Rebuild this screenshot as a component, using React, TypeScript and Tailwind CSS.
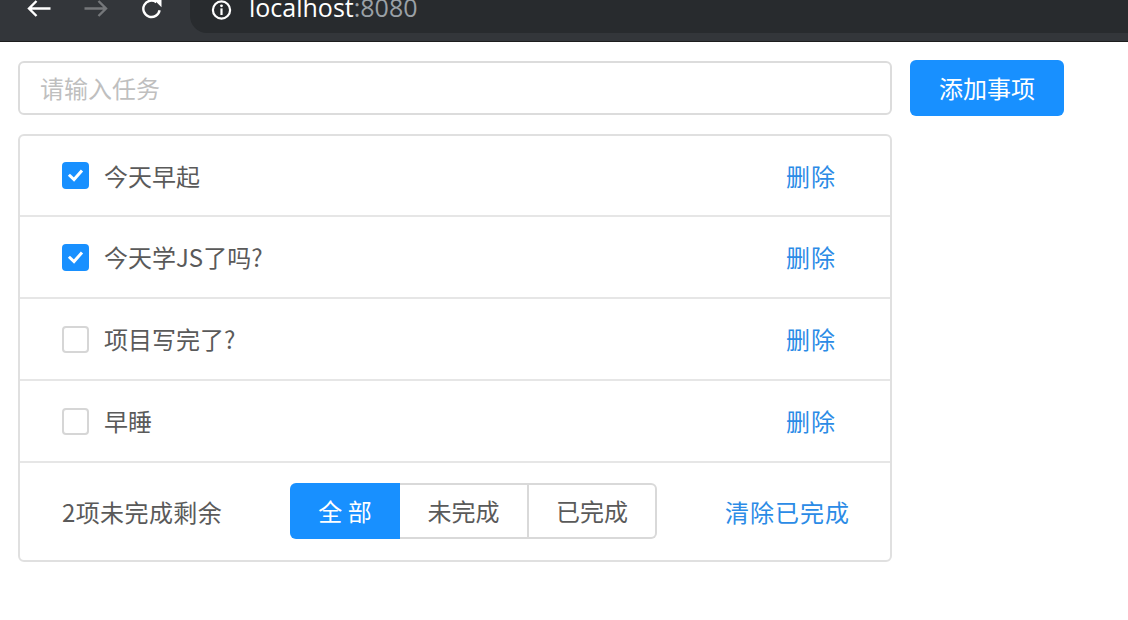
import React from 'react';

const items = [
  { text: '今天早起', done: true },
  { text: '今天学JS了吗?', done: true },
  { text: '项目写完了?', done: false },
  { text: '早睡', done: false },
];

const cjk = { fontFamily: '"Noto Sans CJK SC", "Noto Sans", sans-serif' };

function Check({ done }: { done: boolean }) {
  if (done) {
    return (
      <div className="w-[27px] h-[27px] rounded-[4px] bg-[#1890ff] flex items-center justify-center shrink-0">
        <svg width="17" height="17" viewBox="0 0 17 17">
          <path d="M3 8.8 L7 12.6 L14 4.6" fill="none" stroke="white" strokeWidth="3" strokeLinecap="square" />
        </svg>
      </div>
    );
  }
  return <div className="w-[27px] h-[27px] rounded-[4px] border-2 border-[#d6d6d6] bg-white shrink-0" />;
}

export default function App() {
  return (
    <div className="w-[1128px] h-[620px] bg-white overflow-hidden" style={cjk}>
      {/* browser toolbar */}
      <div className="h-[42px] bg-[#33363a] border-b border-[#1d1d1d] flex items-start">
        <div className="w-[190px] flex items-start h-[33px]">
          <svg className="ml-[26px] -mt-[1px]" width="26" height="20" viewBox="0 0 26 20">
            <path d="M24.5 9.5 H3 M10.5 2 L3 9.5 L10.5 17" fill="none" stroke="#ffffff" strokeWidth="2.4" />
          </svg>
          <svg className="ml-[31px] -mt-[1px]" width="26" height="20" viewBox="0 0 26 20">
            <path d="M1.5 9.5 H23 M15.5 2 L23 9.5 L15.5 17" fill="none" stroke="#75777a" strokeWidth="2.4" />
          </svg>
          <svg className="ml-[31px] -mt-[2px]" width="26" height="22" viewBox="0 0 26 22">
            <path d="M16.4 4.2 A8.2 8.2 0 1 0 19.6 12.3" fill="none" stroke="#ffffff" strokeWidth="2.4" />
            <path d="M13.5 1.2 L21.5 1.2 L21.5 9.2 Z" fill="#ffffff" />
          </svg>
        </div>
        <div className="flex-1 h-[33px] bg-[#282b2e] rounded-bl-[17px] flex items-start">
          <svg className="ml-[21px] mt-[0px]" width="22" height="22" viewBox="0 0 22 22">
            <circle cx="10.5" cy="10" r="8.6" fill="none" stroke="#ffffff" strokeWidth="2.2" />
            <circle cx="10.5" cy="5.8" r="1.4" fill="#ffffff" />
            <rect x="9.4" y="8.4" width="2.2" height="6.6" fill="#ffffff" />
          </svg>
          <div
            className="ml-[16px] -mt-[5px] text-[25px] leading-[25px] whitespace-nowrap"
            style={{ fontFamily: '"Open Sans", "Noto Sans", sans-serif' }}
          >
            <span className="text-white">localhost</span>
            <span className="text-[#9aa0a6]">:8080</span>
          </div>
        </div>
      </div>

      {/* page */}
      <div className="pl-[18px] pt-[18px]">
        <div className="flex items-center h-[56px]">
          <div className="w-[874px] h-[54px] border-2 border-[#dcdcdc] rounded-[6px] flex items-center pl-[20px] text-[24px] text-[#bfbfbf]">
            请输入任务
          </div>
          <div className="ml-[18px] w-[154px] h-[56px] rounded-[6px] bg-[#1890ff] text-white text-[24px] flex items-center justify-center">
            添加事项
          </div>
        </div>

        <div className="mt-[18px] w-[874px] border-2 border-[#e0e0e0] rounded-[6px]">
          {items.map((it, i) => (
            <div
              key={i}
              className={`${i === 0 ? 'h-[81px]' : 'h-[82px]'} border-b-2 border-[#e6e6e6] flex items-center pl-[42px] pr-[54px]`}
            >
              <Check done={it.done} />
              <span className="ml-[15px] text-[24px] text-[#5a5a5a]">{it.text}</span>
              <span className="ml-auto text-[24px] text-[#2b8be6] tracking-[1px]">删除</span>
            </div>
          ))}
          <div className="h-[97px] flex items-center pl-[42px] pr-[40px]">
            <span className="text-[24px] text-[#5a5a5a] w-[180px] whitespace-nowrap tracking-[0.4px]">2项未完成剩余</span>
            <div className="ml-[48px] flex h-[56px] -mt-[1px] text-[24px]">
              <div className="w-[110px] rounded-l-[6px] bg-[#1890ff] text-white flex items-center justify-center">全 部</div>
              <div className="w-[129px] border-y-2 border-r-2 border-[#d9d9d9] text-[#5a5a5a] flex items-center justify-center">未完成</div>
              <div className="w-[128px] rounded-r-[6px] border-y-2 border-r-2 border-[#d9d9d9] text-[#5a5a5a] flex items-center justify-center">已完成</div>
            </div>
            <span className="ml-auto text-[24px] text-[#2b8be6] tracking-[1px]">清除已完成</span>
          </div>
        </div>
      </div>
    </div>
  );
}
